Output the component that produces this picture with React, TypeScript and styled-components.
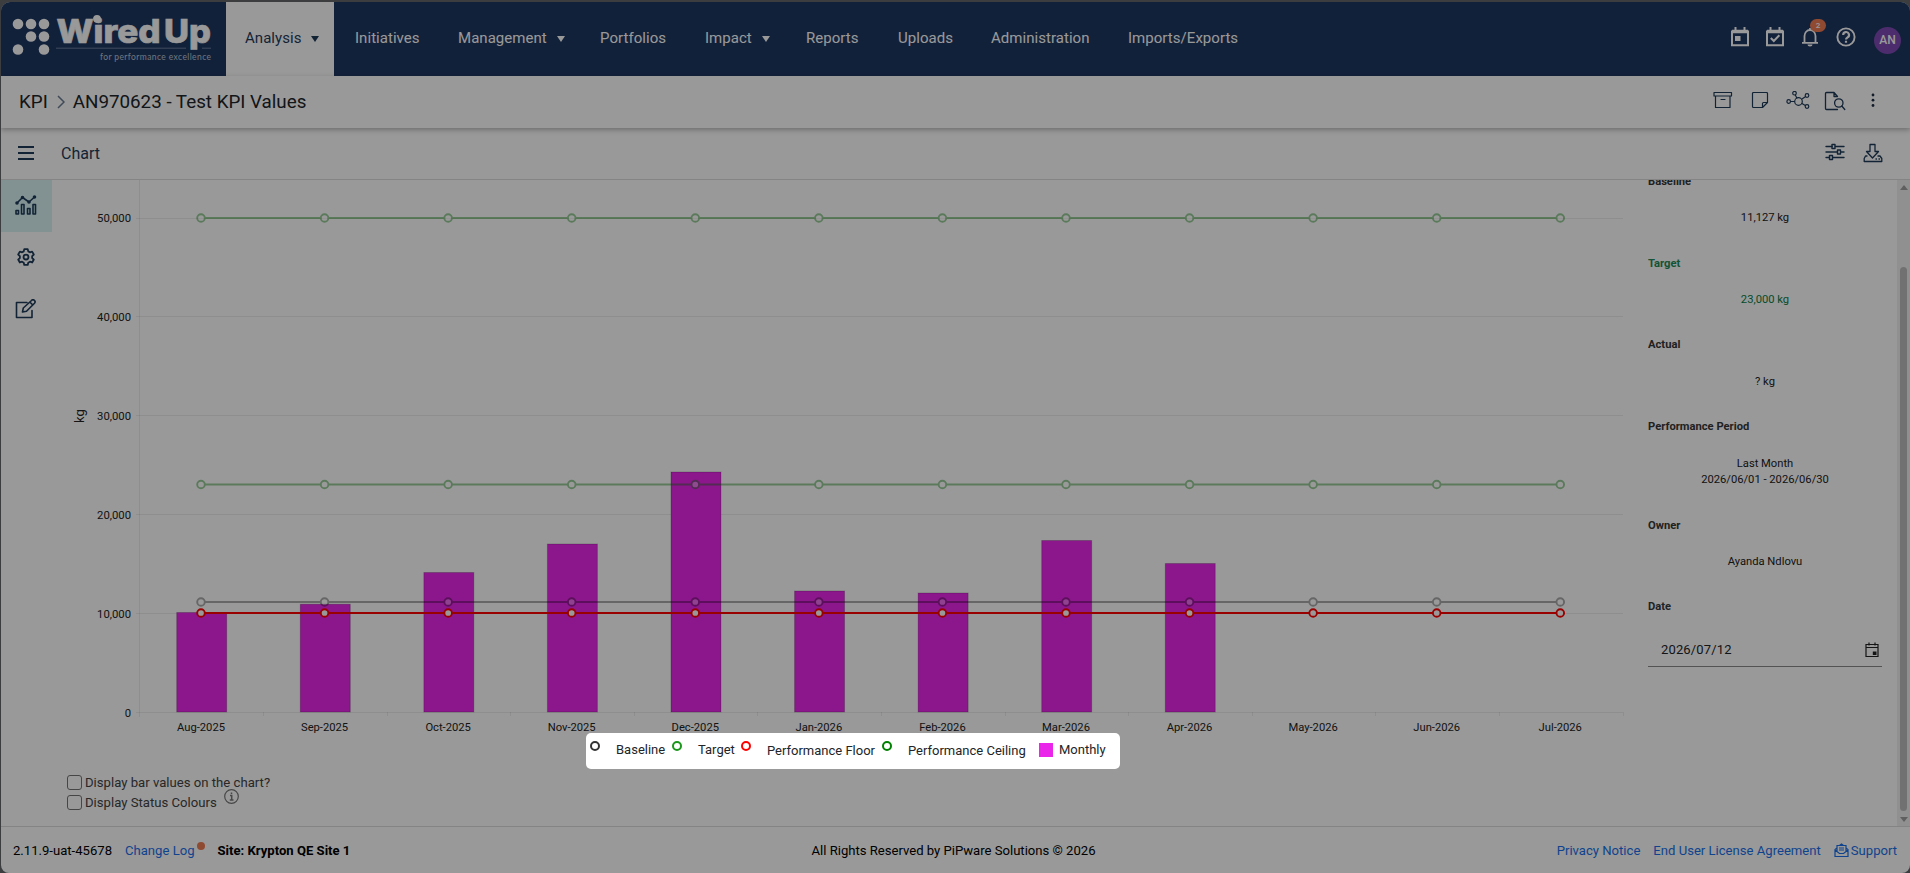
import React from 'react';
import styled, { createGlobalStyle } from 'styled-components';

const GlobalStyle = createGlobalStyle`
  * { box-sizing: border-box; }
  body { margin: 0; background: #63666a; font-family: Roboto, sans-serif; color: #212529; overflow: hidden; }
`;

const Frame = styled.div`
  position: relative;
  height: 873px;
  padding: 2px 0 0 1px;
  overflow: hidden;
`;
const Shell = styled.div`
  height: 871px;
  display: flex;
  flex-direction: column;
  background: #fff;
  border-radius: 9px 9px 8px 8px;
  overflow: hidden;
`;

/* top navigation */
const TopBar = styled.header`
  height: 74px;
  flex: none;
  display: flex;
  background: #1f3762;
  color: #fff;
`;
const Brand = styled.div`
  width: 225px;
  flex: none;
  svg { display: block; }
`;
const NavItem = styled.a<{ $active?: boolean; $w: number; $indent?: number }>`
  width: ${(p) => p.$w}px;
  height: 74px;
  padding-left: ${(p) => p.$indent ?? 19}px;
  padding-bottom: 3px;
  display: flex;
  align-items: center;
  gap: 10px;
  font-size: 15px;
  letter-spacing: 0.04px;
  background: ${(p) => (p.$active ? '#fff' : 'transparent')};
  color: ${(p) => (p.$active ? '#1f3b5a' : '#fff')};
`;
const Caret = styled.i`
  margin-top: 2px;
  border: 4px solid transparent;
  border-top: 6px solid currentColor;
  border-bottom: 0;
`;
const TopActions = styled.div`
  margin-left: auto;
  display: flex;
  align-items: center;
  padding-right: 9px;
  svg { display: block; }
`;
const IconSlot = styled.span<{ $w: number }>`
  width: ${(p) => p.$w}px;
  display: flex;
  justify-content: center;
  position: relative;
`;
const TopIcons = styled.div`
  display: flex;
  padding-bottom: 4px;
`;
const Badge = styled.b`
  position: absolute;
  top: -8px;
  right: 2px;
  width: 16px;
  height: 13px;
  border-radius: 7px;
  background: #f07c54;
  font-size: 8px;
  font-weight: 500;
  line-height: 13px;
  text-align: center;
`;
const Avatar = styled.span`
  width: 27px;
  height: 27px;
  margin: 3px 0 0 10px;
  border-radius: 50%;
  background: #7f4ab5;
  font-size: 12px;
  font-weight: 500;
  line-height: 26px;
  text-align: center;
`;

/* page title */
const TitleBar = styled.div`
  height: 52px;
  flex: none;
  display: flex;
  align-items: center;
  padding: 0 18px 2px 18px;
  font-size: 18.8px;
  box-shadow: 0 2px 5px rgba(0, 0, 0, 0.28);
  position: relative;
  z-index: 1;
  svg { display: block; }
`;
const Crumb = styled.span`
  margin-top: 2px;
  line-height: 24px;
`;
const Chevron = styled.svg`
  margin: 1px 8px 0 9px;
`;
const BarActions = styled.div`
  margin-left: auto;
  display: flex;
`;
const ChartBar = styled.div`
  height: 52px;
  flex: none;
  display: flex;
  align-items: center;
  padding: 0 18px 1px 0;
  border-bottom: 1px solid #dcdcdc;
  color: #1f3b5a;
  svg { display: block; }
`;
const MenuButton = styled.div`
  width: 60px;
  padding-left: 17px;
  padding-bottom: 1px;
`;
const ChartTitle = styled.h2`
  margin: 1px 0 0;
  font-size: 16px;
  font-weight: 400;
`;

/* body */
const Body = styled.main`
  height: 646px;
  flex: none;
  display: flex;
`;
const SideNav = styled.nav`
  width: 51px;
  flex: none;
`;
const SideItem = styled.a<{ $active?: boolean }>`
  height: 52px;
  display: flex;
  align-items: center;
  justify-content: center;
  padding: 0 2px 2px 0;
  background: ${(p) => (p.$active ? '#d9f4f6' : 'transparent')};
`;
const ChartColumn = styled.section`
  width: 1596px;
  flex: none;
`;
const Plot = styled.svg`
  display: block;
  font-family: Roboto, sans-serif;
`;
const Legend = styled.div`
  height: 34px;
  width: 533px;
  margin: 0 0 0 535px;
  display: flex;
  font-size: 13px;
  line-height: 16px;
  white-space: nowrap;
`;
const LegendItem = styled.span<{ $w: number; $top?: number }>`
  width: ${(p) => p.$w}px;
  flex: none;
  display: flex;
  padding-top: ${(p) => p.$top ?? 8}px;
`;
const Ring = styled.i<{ $c: string; $up: number }>`
  width: 10px;
  height: 10px;
  flex: none;
  margin: ${(p) => -p.$up}px 16px 0 3px;
  border: 2px solid ${(p) => p.$c};
  border-radius: 50%;
`;
const Swatch = styled.i`
  width: 14px;
  height: 14px;
  flex: none;
  margin: 1px 6px 0 2px;
  background: #e926e9;
`;
const Options = styled.div`
  padding: 4px 0 0 15px;
`;
const Option = styled.label`
  height: 20px;
  display: flex;
  align-items: center;
  gap: 3px;
  font-size: 13.15px;
  color: #444;
  svg { margin: -12px 0 0 4px; }
`;
const Box = styled.i`
  width: 15px;
  height: 15px;
  border: 1px solid #767676;
  border-radius: 3px;
`;

/* summary panel */
const Summary = styled.aside`
  flex: 1;
  height: 646px;
  overflow: hidden;
  padding-right: 15px;
  font-size: 11.2px;
  line-height: 16px;
`;
const FactList = styled.div`
  margin-top: -6px;
`;
const Fact = styled.div<{ $h: number; $green?: boolean }>`
  height: ${(p) => p.$h}px;
  color: ${(p) => (p.$green ? '#078048' : '#222')};
`;
const FactName = styled.h3<{ $gap?: number }>`
  margin: 0 0 ${(p) => p.$gap ?? 20}px;
  font-size: 11.2px;
  font-weight: 700;
  color: inherit;
  opacity: 0.9;
`;
const FactValue = styled.div`
  text-align: center;
`;
const DateField = styled.div`
  height: 34px;
  padding: 0 2px 0 13px;
  display: flex;
  justify-content: space-between;
  align-items: center;
  border-bottom: 1px solid #8a8a8a;
  font-size: 13px;
  letter-spacing: 0.15px;
`;
const ScrollTrack = styled.div`
  width: 13px;
  flex: none;
  display: flex;
  flex-direction: column;
  align-items: center;
  background: #f1f1f1;
`;
const Arrow = styled.i<{ $down?: boolean }>`
  border: 4px solid transparent;
  border-${(p) => (p.$down ? 'top' : 'bottom')}: 5px solid #9f9f9f;
  border-${(p) => (p.$down ? 'bottom' : 'top')}: 0;
  margin-top: ${(p) => (p.$down ? 6 : 5)}px;
`;
const Thumb = styled.div`
  width: 7px;
  height: 544px;
  margin-top: 77px;
  border-radius: 4px;
  background: #bdbdbd;
`;

/* footer */
const Footer = styled.footer`
  flex: 1;
  display: grid;
  grid-template-columns: 1fr auto 1fr;
  align-items: center;
  border-top: 1px solid #dcdcdc;
  padding: 1px 13px 0 12px;
  font-size: 13.1px;
  color: #000;
`;
const FooterGroup = styled.div<{ $end?: boolean }>`
  display: flex;
  gap: 13px;
  justify-content: ${(p) => (p.$end ? 'flex-end' : 'flex-start')};
`;
const Copyright = styled.span`
  margin-right: 3px;
`;
const FooterLink = styled.a`
  display: flex;
  gap: 2px;
  color: #1a71ec;
`;
const Dot = styled.i`
  width: 8px;
  height: 8px;
  margin-top: -1px;
  border-radius: 50%;
  background: #ef7c54;
`;

const Spotlight = styled.div`
  position: absolute;
  left: 586px;
  top: 733px;
  width: 534px;
  height: 36px;
  border-radius: 5px;
  box-shadow: 0 0 0 2000px rgba(0, 0, 0, 0.4);
  pointer-events: none;
  z-index: 5;
`;

const months = ['Aug-2025', 'Sep-2025', 'Oct-2025', 'Nov-2025', 'Dec-2025', 'Jan-2026', 'Feb-2026', 'Mar-2026', 'Apr-2026', 'May-2026', 'Jun-2026', 'Jul-2026'];
const barTops = [432.5, 424.2, 392.5, 364, 292, 411, 413, 360.5, 383.5];
const ticks: [string, number][] = [['50,000', 38], ['40,000', 136.5], ['30,000', 235.5], ['20,000', 334.5], ['10,000', 433.5], ['0', 532.5]];
const levels: [number, string, number][] = [[38, '#008000', 0.4], [304.5, '#008000', 0.4], [422, '#000', 0.33], [433, '#ff0000', 1]];
const cx = (i: number) => 149 + i * 123.57;

const Chart = () => (
  <Plot width="1596" height="554" viewBox="0 0 1596 554">
    <g stroke="#000" strokeOpacity="0.07" fill="none">
      <path d="M87.5 0V537" />
      {ticks.map(([t, y]) => <path key={t} d={`M84 ${Math.floor(y) + 0.5}H1571`} />)}
      {months.map((m, i) => <path key={m} d={`M${211.5 + Math.round(i * 123.6)} 532V536`} />)}
    </g>
    <g fontSize="11.3" fill="#222">
      {ticks.map(([t, y]) => <text key={t} x="79" y={y + 4} textAnchor="end">{t}</text>)}
      {months.map((m, i) => <text key={m} x={cx(i)} y="551" textAnchor="middle" fontSize="11.2">{m}</text>)}
      <text transform="translate(32 236) rotate(-90)" textAnchor="middle" fontSize="13">kg</text>
    </g>
    {barTops.map((y, i) => (
      <rect key={i} x={cx(i) - 24.3} y={y} width="50" height={532 - y} fill="#e926e9" stroke="#000" strokeOpacity="0.2" strokeWidth="1" />
    ))}
    {levels.map(([y, c, o], n) => (
      <g key={n} stroke={c} strokeWidth={2} opacity={o}>
        <path d={`M${cx(0)} ${y}H${cx(11)}`} />
        {months.map((m, i) => <circle key={m} cx={cx(i)} cy={y} r="3.8" strokeWidth="1.9" fill="#fff" />)}
      </g>
    ))}
  </Plot>
);

const ink = { fill: 'none', stroke: '#1f3b5a', strokeLinecap: 'round', strokeLinejoin: 'round' } as const;

const Logo = () => (
  <svg width="225" height="74" viewBox="1 2 225 74" fill="#fff">
    {[[18, 24], [31, 24], [44, 24], [31, 36.5], [44, 36.5], [18, 49.5], [44, 49.5]].map(([x, y]) => (
      <circle key={`${x}-${y}`} cx={x} cy={y} r="5.3" />
    ))}
    <g fontFamily="Inter, sans-serif" fontWeight="800" fontSize="33" stroke="#fff" strokeWidth="0.7">
      <text x="56.500" y="42.800" textLength="104" lengthAdjust="spacingAndGlyphs">Wired</text>
      <text x="164" y="42.800" textLength="47" lengthAdjust="spacingAndGlyphs">Up</text>
    </g>
    <circle cx="97" cy="18.800" r="3.900" />
    <path d="M56 48.200H186M202 48.200H211" stroke="#6c7d9b" strokeWidth="1" />
    <text x="100" y="60" fontFamily="Lato, sans-serif" fontSize="8.500" textLength="111" fill="#bcc5d4">for performance excellence</text>
  </svg>
);

const CalendarTop = ({ check }: { check?: boolean }) => (
  <svg width="18" height="20" viewBox="0 0 18 20" fill="none" stroke="#fff" strokeWidth="2">
    <path d="M1 4.5h16v13.8H1zM4.5 0v3M13.5 0v3" />
    <path d="M1 4.5h16" strokeWidth="3.5" />
    {check ? <path d="M4.8 11l3 3 5.6-5.8" /> : <path d="M4 9h5.5v5H4z" fill="#fff" stroke="none" />}
  </svg>
);

export default function App() {
  return (
    <>
      <GlobalStyle />
      <Frame>
        <Shell>
          <TopBar>
            <Brand><Logo /></Brand>
            <NavItem $active $w={108}>Analysis <Caret /></NavItem>
            <NavItem $w={105} $indent={21}>Initiatives</NavItem>
            <NavItem $w={142}>Management <Caret /></NavItem>
            <NavItem $w={105}>Portfolios</NavItem>
            <NavItem $w={101}>Impact <Caret /></NavItem>
            <NavItem $w={92}>Reports</NavItem>
            <NavItem $w={93}>Uploads</NavItem>
            <NavItem $w={137}>Administration</NavItem>
            <NavItem $w={150}>Imports/Exports</NavItem>
            <TopActions>
              <TopIcons>
                <IconSlot $w={35}><CalendarTop /></IconSlot>
                <IconSlot $w={35}><CalendarTop check /></IconSlot>
                <IconSlot $w={36}>
                  <svg width="18" height="20" viewBox="0 0 18 20" fill="none" stroke="#fff" strokeWidth="1.8">
                    <path d="M1 15.8h16M3.5 15.5V9a5.5 6 0 0 1 11 0v6.5M9 1v2" />
                    <path d="M6.5 17.5h5a2.5 2 0 0 1-5 0z" fill="#fff" stroke="none" />
                  </svg>
                  <Badge>2</Badge>
                </IconSlot>
                <IconSlot $w={36}>
                  <svg width="20" height="20" viewBox="0 0 20 20" fill="none" stroke="#fff" strokeWidth="1.9">
                    <circle cx="10" cy="10" r="8.6" />
                    <path d="M7.200 8a2.900 2.900 0 1 1 4.400 2.400C10.400 11.200 10 11.500 10 12.600M10 13.800v2" strokeWidth="2.200" />
                  </svg>
                </IconSlot>
              </TopIcons>
              <Avatar>AN</Avatar>
            </TopActions>
          </TopBar>

          <TitleBar>
            <Crumb>KPI</Crumb>
            <Chevron width="8" height="14" viewBox="0 0 8 14" fill="none" stroke="#6b7c93" strokeWidth="1.5"><path d="M1 1l6 6-6 6" /></Chevron>
            <Crumb>AN970623 - Test KPI Values</Crumb>
            <BarActions>
              <IconSlot $w={37}>
                <svg width="20" height="18" viewBox="0 0 20 18" {...ink} strokeWidth="1.2"><path d="M1 1.500h17.500v3.500H1zM2.500 5v11.500h14.500V5M8 8.500h4" /></svg>
              </IconSlot>
              <IconSlot $w={38}>
                <svg width="18" height="18" viewBox="0 0 18 18" {...ink} strokeWidth="1.2"><path d="M16.500 11.500V2.500a1 1 0 0 0-1-1h-13a1 1 0 0 0-1 1v13a1 1 0 0 0 1 1h9zM16.500 11.500h-4a1 1 0 0 0-1 1v4" /></svg>
              </IconSlot>
              <IconSlot $w={37}>
                <svg width="24" height="18" viewBox="0 0 24 18" {...ink} strokeWidth="1.200">
                  <circle cx="12.500" cy="10.500" r="3.800" /><circle cx="8.500" cy="2.200" r="1.800" /><circle cx="2.700" cy="10.500" r="1.800" /><circle cx="21" cy="4.500" r="1.800" /><circle cx="21" cy="15.500" r="1.800" />
                  <path d="M9.300 4l1.500 3M4.700 10.500h3.500M16 8l3.300-2.300M16 12.500l3.300 2" />
                </svg>
              </IconSlot>
              <IconSlot $w={37}>
                <svg width="22" height="20" viewBox="0 0 22 20" {...ink} strokeWidth="1.300">
                  <path d="M13.500 18.500H2.500a1 1 0 0 1-1-1V2.500a1 1 0 0 1 1-1H10l3.500 4M10 1.500v4h3.500" /><circle cx="14.800" cy="12" r="4.200" /><path d="M17.800 15l3 3.500" />
                </svg>
              </IconSlot>
              <IconSlot $w={39}>
                <svg width="4" height="18" viewBox="0 0 4 18" fill="#1f2f45"><circle cx="2" cy="4" r="1.400" /><circle cx="2" cy="9.200" r="1.400" /><circle cx="2" cy="14.500" r="1.400" /></svg>
              </IconSlot>
            </BarActions>
          </TitleBar>

          <ChartBar>
            <MenuButton>
              <svg width="16" height="14" viewBox="0 0 16 14" stroke="#1f3b5a" strokeWidth="2"><path d="M0 1h16M0 7h16M0 13h16" /></svg>
            </MenuButton>
            <ChartTitle>Chart</ChartTitle>
            <BarActions>
              <IconSlot $w={37}>
                <svg width="20" height="18" viewBox="0 0 20 18" {...ink} strokeWidth="1.400">
                  <path d="M1 3.500h6M10.500 3.500H19M1 9h11.500M16 9h3M1 14.500h3.500M8 14.500h11" />
                  <path d="M7 1.500h3v4H7zM12.500 7h3v4h-3zM4.500 12.500h3v4h-3z" />
                </svg>
              </IconSlot>
              <IconSlot $w={39}>
                <svg width="20" height="20" viewBox="0 0 20 20" {...ink} strokeWidth="1.300">
                  <path d="M7 1.500h5v7h3.500L9.500 15 3.500 8.500H7zM4 13H2.500l-1.300 2.500v3h17.600v-3L17 13h-2M13 16h.5M16 16h.5" />
                </svg>
              </IconSlot>
            </BarActions>
          </ChartBar>

          <Body>
            <SideNav>
              <SideItem $active>
                <svg width="24" height="20" viewBox="0 0 24 20" {...ink} strokeWidth="1.600">
                  <path d="M3 8l5.500-5.500L15 7l5.500-5M2 15.500h2.500V19H2zM7.500 9.500H10V19H7.500zM13.500 13.500H16V19h-2.500zM19 9.500h2.500V19H19z" />
                  {[[3, 8], [8.5, 2.5], [15, 7], [20.5, 2]].map(([x, y]) => <circle key={x} cx={x} cy={y} r="1" fill="#1f3b5a" />)}
                </svg>
              </SideItem>
              <SideItem>
                <svg width="18" height="18" viewBox="0 0 24 24" {...ink} strokeWidth="2.400">
                  <path d="M9.700 1.500h4.600l.7 3 2.200 1.300 3-1 2.200 3.900-2.200 2.200v2.400l2.200 2.100-2.200 3.900-3-1-2.200 1.300-.7 3H9.700l-.7-3-2.200-1.300-3 1-2.200-3.900 2.200-2.100v-2.400L1.600 8.700l2.200-3.900 3 1L9 4.500z" /><circle cx="12" cy="12" r="3.300" />
                </svg>
              </SideItem>
              <SideItem>
                <svg width="22" height="20" viewBox="0 0 22 20" {...ink} strokeWidth="1.600">
                  <path d="M12 3.500H1.500v15h15.500v-7" /><path d="M7.500 13l.8-4L16.500 1.500a1.900 1.900 0 0 1 3 2.700L11.500 12.200zM14.800 3l3 3" />
                </svg>
              </SideItem>
            </SideNav>

            <ChartColumn>
              <Chart />
              <Legend>
                <LegendItem $w={82}><Ring $c="#333" $up={1} />Baseline</LegendItem>
                <LegendItem $w={69}><Ring $c="#1a961a" $up={1} />Target</LegendItem>
                <LegendItem $w={141} $top={9}><Ring $c="#ff0000" $up={2} />Performance Floor</LegendItem>
                <LegendItem $w={158} $top={9}><Ring $c="#008000" $up={2} />Performance Ceiling</LegendItem>
                <LegendItem $w={80}><Swatch />Monthly</LegendItem>
              </Legend>
              <Options>
                <Option><Box />Display bar values on the chart?</Option>
                <Option>
                  <Box />Display Status Colours
                  <svg width="15" height="15" viewBox="0 0 15 15" fill="none" stroke="#777" strokeWidth="1.200"><circle cx="7.500" cy="7.500" r="6.800" /><path d="M6 6.500h1.700V11M5.800 11h3.700M7.500 3.500v1.500" strokeWidth="1.500" /></svg>
                </Option>
              </Options>
            </ChartColumn>

            <Summary>
              <FactList>
                <Fact $h={82}><FactName>Baseline</FactName><FactValue>11,127 kg</FactValue></Fact>
                <Fact $h={81} $green><FactName>Target</FactName><FactValue>23,000 kg</FactValue></Fact>
                <Fact $h={82}><FactName $gap={21}>Actual</FactName><FactValue>? kg</FactValue></Fact>
                <Fact $h={99}><FactName $gap={21}>Performance Period</FactName><FactValue>Last Month<br />2026/06/01 - 2026/06/30</FactValue></Fact>
                <Fact $h={81}><FactName>Owner</FactName><FactValue>Ayanda Ndlovu</FactValue></Fact>
                <FactName $gap={18}>Date</FactName>
                <DateField>
                  2026/07/12
                  <svg width="16" height="16" viewBox="0 0 16 16" fill="none" stroke="#222" strokeWidth="1.200"><path d="M2 2.500h12v12H2zM2 5.500h12M5 .500v3M11 .500v3" /><path d="M8.800 9.500h3.700V13H8.800z" fill="#222" stroke="none" /></svg>
                </DateField>
              </FactList>
            </Summary>
            <ScrollTrack><Arrow /><Thumb /><Arrow $down /></ScrollTrack>
          </Body>

          <Footer>
            <FooterGroup>
              <span>2.11.9-uat-45678</span>
              <FooterLink>Change Log<Dot /></FooterLink>
              <b>Site: Krypton QE Site 1</b>
            </FooterGroup>
            <Copyright>All Rights Reserved by PiPware Solutions © 2026</Copyright>
            <FooterGroup $end>
              <FooterLink>Privacy Notice</FooterLink>
              <FooterLink>End User License Agreement</FooterLink>
              <FooterLink>
                <svg width="15" height="15" viewBox="0 0 15 15" fill="none" stroke="#1a71ec" strokeWidth="1.200"><path d="M3 5L1 6.500v7h13v-7L12 5M3 8V2.500h9V8M1 7l4.500 3.500h4L14 7M5.500 2.500l2-1.500 2 1.500M5 5h5M5 7h5" /></svg>
                Support
              </FooterLink>
            </FooterGroup>
          </Footer>
        </Shell>
        <Spotlight />
      </Frame>
    </>
  );
}
